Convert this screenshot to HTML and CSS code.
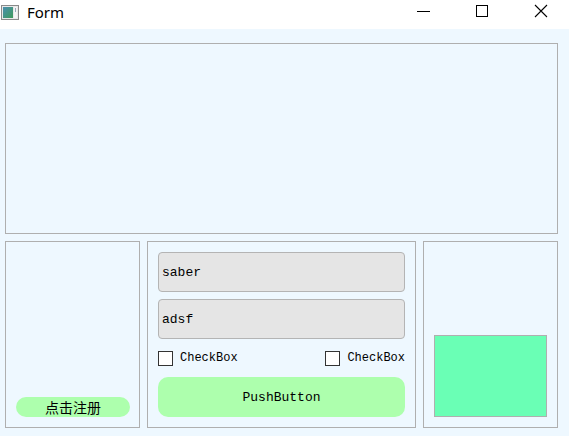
FILE: index.html
```html
<!DOCTYPE html>
<html>
<head>
<meta charset="utf-8">
<link rel="stylesheet" href="styles.css">
</head>
<body>
<div class="window">
  <div class="titlebar">
    <svg class="app-icon" width="18" height="15" viewBox="0 0 18 15">
      <defs>
        <linearGradient id="g" x1="0" y1="0" x2="1" y2="1">
          <stop offset="0" stop-color="#4a8fb0"/>
          <stop offset="1" stop-color="#3f9a5a"/>
        </linearGradient>
      </defs>
      <rect x="0.5" y="0.5" width="17" height="14" fill="#e8e8e8" stroke="#8a8a8a"/>
      <rect x="2" y="2" width="10" height="11" fill="url(#g)"/>
      <rect x="13" y="2" width="3" height="11" fill="#f4f4f4"/>
      <rect x="14" y="3" width="1" height="4" fill="#9ab"/>
    </svg>
    <span class="title">Form</span>
    <svg class="controls" width="169" height="29" viewBox="0 0 169 29">
      <path d="M17 11.5H30" stroke="#000" stroke-width="1"/>
      <rect x="76.5" y="5.5" width="11" height="11" fill="none" stroke="#000"/>
      <path d="M135 5L147 17M147 5L135 17" stroke="#000" stroke-width="1.1"/>
    </svg>
  </div>
  <div class="client">
    <div class="frame top-frame"></div>
    <div class="bottom-row">
      <div class="frame side-frame left-frame">
        <button class="reg-btn">点击注册</button>
      </div>
      <div class="frame mid-frame">
        <div class="line-edit">saber</div>
        <div class="line-edit">adsf</div>
        <div class="check-row">
          <label class="check"><span class="box"></span><span class="check-text">CheckBox</span></label>
          <label class="check"><span class="box"></span><span class="check-text">CheckBox</span></label>
        </div>
        <button class="push-btn">PushButton</button>
      </div>
      <div class="frame side-frame right-frame">
        <div class="green-box"></div>
      </div>
    </div>
  </div>
</div>
</body>
</html>
```
FILE: styles.css
```css
html, body {
  margin: 0;
  padding: 0;
  background: #eef8ff;
}
.window {
  width: 569px;
  height: 436px;
  display: flex;
  flex-direction: column;
  overflow: hidden;
}
.titlebar {
  height: 29px;
  background: #ffffff;
  display: flex;
  align-items: center;
  flex: none;
}
.app-icon {
  margin-left: 1px;
  margin-top: -4px;
}
.title {
  margin-left: 8px;
  font-family: "Noto Sans", sans-serif;
  font-size: 15px;
  color: #000;
  margin-top: -5px;
}
.controls {
  margin-left: auto;
  display: block;
  align-self: flex-start;
}
.client {
  flex: 1;
  background: #eef8ff;
  padding: 14px 11px 8px 5px;
  display: flex;
  flex-direction: column;
  gap: 7px;
}
.frame {
  border: 1px solid #afafaf;
  box-sizing: border-box;
}
.top-frame {
  height: 191px;
  flex: none;
}
.bottom-row {
  height: 187px;
  display: flex;
  gap: 7px;
}
.side-frame {
  width: 135px;
  flex: none;
  padding: 10px;
  display: flex;
  flex-direction: column;
  justify-content: flex-end;
}
.reg-btn {
  height: 20px;
  width: 114px;
  border: none;
  border-radius: 10px;
  background: #adffad;
  font-family: "Noto Sans CJK SC", sans-serif;
  font-size: 14px;
  color: #000;
  padding: 0;
  line-height: 20px;
}
.mid-frame {
  width: 269px;
  flex: none;
  padding: 10px;
  display: flex;
  flex-direction: column;
  gap: 7px;
}
.line-edit {
  height: 40px;
  box-sizing: border-box;
  border: 1px solid #b4b4b4;
  border-radius: 4px;
  background: #e5e5e5;
  font-family: "Liberation Mono", monospace;
  font-size: 13px;
  color: #000;
  padding-left: 3px;
  display: flex;
  align-items: center;
}
.check-row {
  height: 24px;
  display: flex;
  justify-content: space-between;
  align-items: center;
}
.check {
  display: flex;
  align-items: center;
  gap: 7px;
}
.box {
  width: 15px;
  height: 15px;
  box-sizing: border-box;
  border: 1px solid #333;
  background: #fff;
}
.check-text {
  font-family: "Liberation Mono", monospace;
  font-size: 12px;
  color: #000;
}
.push-btn {
  height: 40px;
  border: none;
  border-radius: 10px;
  background: #adffad;
  font-family: "Liberation Mono", monospace;
  font-size: 13px;
  color: #000;
  padding: 0;
}
.right-frame {
  padding: 10px;
}
.green-box {
  height: 82px;
  width: 113px;
  box-sizing: border-box;
  border: 1px solid #afafaf;
  background: #6affb5;
}
```
